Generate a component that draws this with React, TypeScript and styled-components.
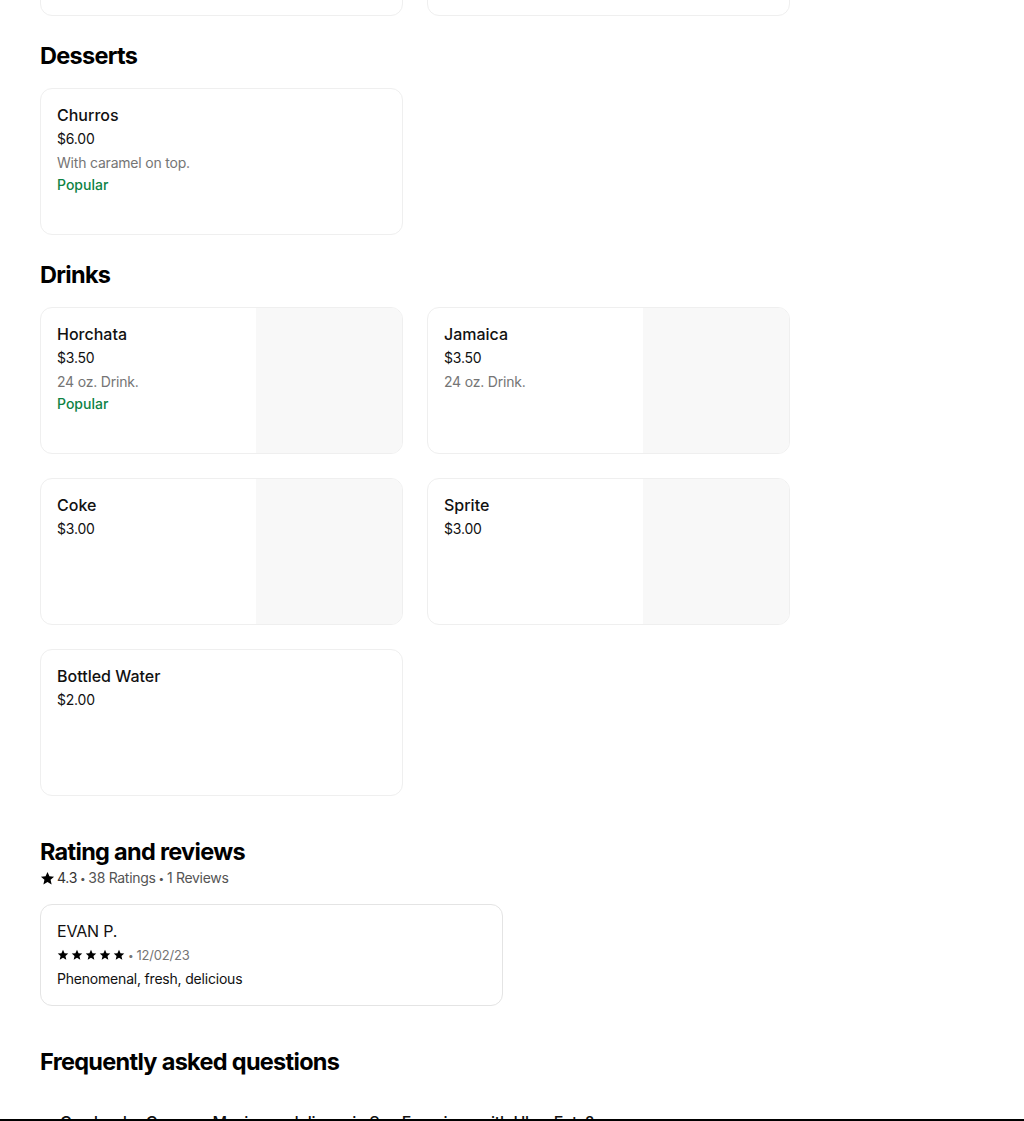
import React from "react";
import styled, { createGlobalStyle } from "styled-components";

const Global = createGlobalStyle`
  html, body { margin: 0; padding: 0; background: #fff; }
  body { font-family: Inter, "Noto Sans", "Liberation Sans", sans-serif; color: #000; overflow: hidden; }
  * { box-sizing: border-box; }
`;

const Page = styled.main`
  padding: 0 40px;
  display: flex;
  flex-direction: column;
`;

const Section = styled.section<{ $gap?: number }>`
  margin-top: ${(p) => p.$gap ?? 24}px;
  display: flex;
  flex-direction: column;
`;

const Heading = styled.h2`
  margin: 0;
  font-size: 23.5px;
  line-height: 32px;
  font-weight: 700;
  letter-spacing: -0.7px;
  color: #000;
`;

const Grid = styled.div<{ $offset?: number }>`
  display: grid;
  grid-template-columns: repeat(2, 363px);
  gap: 24px;
  margin-top: ${(p) => p.$offset ?? 16}px;
`;

const Card = styled.div`
  height: 147px;
  border: 1px solid #efefef;
  border-radius: 12px;
  overflow: hidden;
  display: flex;
  background: #fff;
`;

const CardBody = styled.div`
  flex: 1;
  padding: 16px;
  display: flex;
  flex-direction: column;
`;

const Thumb = styled.div`
  width: 146px;
  background: #f8f8f8;
`;

const Title = styled.div`
  font-size: 16px;
  line-height: 20px;
  font-weight: 500;
  color: #111;
`;

const Price = styled.div`
  margin-top: 4px;
  font-size: 14px;
  line-height: 20px;
  letter-spacing: -0.2px;
  color: #111;
`;

const Desc = styled.div`
  margin-top: 4px;
  font-size: 14px;
  line-height: 20px;
  letter-spacing: -0.2px;
  color: #757575;
`;

const Tag = styled.div`
  margin-top: 2px;
  font-size: 14px;
  line-height: 20px;
  font-weight: 500;
  color: #0e8345;
`;

const Meta = styled.div`
  display: flex;
  align-items: center;
  gap: 3px;
  font-size: 14px;
  line-height: 20px;
  letter-spacing: -0.3px;
  color: #545454;
`;

const Dot = styled.span`
  font-size: 10px;
`;

const Score = styled.span`
  display: inline-flex;
  align-items: center;
  gap: 2px;
  color: #333;
`;

const ReviewCard = styled.div`
  margin-top: 16px;
  width: 463px;
  border: 1px solid #e4e4e4;
  border-radius: 12px;
  padding: 16px;
  display: flex;
  flex-direction: column;
`;

const Reviewer = styled.div`
  font-size: 16px;
  line-height: 20px;
  letter-spacing: -0.2px;
  color: #111;
`;

const ReviewMeta = styled.div`
  margin-top: 4px;
  display: flex;
  align-items: center;
  gap: 3px;
  font-size: 13px;
  line-height: 20px;
  letter-spacing: -0.2px;
  color: #757575;
`;

const Stars = styled.span`
  display: inline-flex;
  gap: 2px;
`;

const ReviewText = styled.div`
  margin-top: 4px;
  font-size: 14px;
  line-height: 20px;
  letter-spacing: -0.2px;
  color: #111;
`;

const FaqList = styled.div`
  margin-top: 24px;
  display: flex;
  flex-direction: column;
`;

const FaqItem = styled.div`
  display: flex;
  align-items: center;
  justify-content: space-between;
  padding: 8px 20px;
  font-size: 16px;
  line-height: 24px;
  font-weight: 500;
  letter-spacing: -0.25px;
  color: #111;
`;

const BottomRule = styled.div`
  position: fixed;
  left: 0;
  right: 0;
  bottom: 0;
  height: 2px;
  background: #000;
`;

const Star = ({ size }: { size: number }) => (
  <svg width={size} height={size} viewBox="0 0 24 24" fill="#000">
    <path d="M12 1.5l3.1 6.9 7.4.7-5.6 5 1.7 7.4L12 17.6l-6.6 3.9 1.7-7.4-5.6-5 7.4-.7z" />
  </svg>
);

const Chevron = () => (
  <svg width="14" height="14" viewBox="0 0 24 24" fill="none" stroke="#000" strokeWidth="2.5">
    <path d="M5 9l7 7 7-7" />
  </svg>
);

type Item = { name: string; price: string; desc?: string; popular?: boolean; thumb?: boolean };

const desserts: Item[] = [{ name: "Churros", price: "$6.00", desc: "With caramel on top.", popular: true }];
const drinks: Item[] = [
  { name: "Horchata", price: "$3.50", desc: "24 oz. Drink.", popular: true, thumb: true },
  { name: "Jamaica", price: "$3.50", desc: "24 oz. Drink.", thumb: true },
  { name: "Coke", price: "$3.00", thumb: true },
  { name: "Sprite", price: "$3.00", thumb: true },
  { name: "Bottled Water", price: "$2.00" },
];

const MenuCard = ({ item }: { item: Item }) => (
  <Card>
    <CardBody>
      <Title>{item.name}</Title>
      <Price>{item.price}</Price>
      {item.desc && <Desc>{item.desc}</Desc>}
      {item.popular && <Tag>Popular</Tag>}
    </CardBody>
    {item.thumb && <Thumb />}
  </Card>
);

export default function App() {
  return (
    <>
      <Global />
      <Page>
        <Grid $offset={-131}>
          <Card />
          <Card />
        </Grid>
        <Section>
          <Heading>Desserts</Heading>
          <Grid>
            {desserts.map((d) => (
              <MenuCard key={d.name} item={d} />
            ))}
          </Grid>
        </Section>
        <Section>
          <Heading>Drinks</Heading>
          <Grid>
            {drinks.map((d) => (
              <MenuCard key={d.name} item={d} />
            ))}
          </Grid>
        </Section>
        <Section $gap={40}>
          <Heading>Rating and reviews</Heading>
          <Meta>
            <Score>
              <Star size={15} />
              4.3
            </Score>
            <Dot>•</Dot>
            <span>38 Ratings</span>
            <Dot>•</Dot>
            <span>1 Reviews</span>
          </Meta>
          <ReviewCard>
            <Reviewer>EVAN P.</Reviewer>
            <ReviewMeta>
              <Stars>
                {[0, 1, 2, 3, 4].map((i) => (
                  <Star key={i} size={12} />
                ))}
              </Stars>
              <Dot>•</Dot>
              <span>12/02/23</span>
            </ReviewMeta>
            <ReviewText>Phenomenal, fresh, delicious</ReviewText>
          </ReviewCard>
        </Section>
        <Section $gap={40}>
          <Heading>Frequently asked questions</Heading>
          <FaqList>
            <FaqItem>
              <span>Can I order Corazon Mexicano delivery in San Francisco with Uber Eats?</span>
              <Chevron />
            </FaqItem>
          </FaqList>
        </Section>
      </Page>
      <BottomRule />
    </>
  );
}
